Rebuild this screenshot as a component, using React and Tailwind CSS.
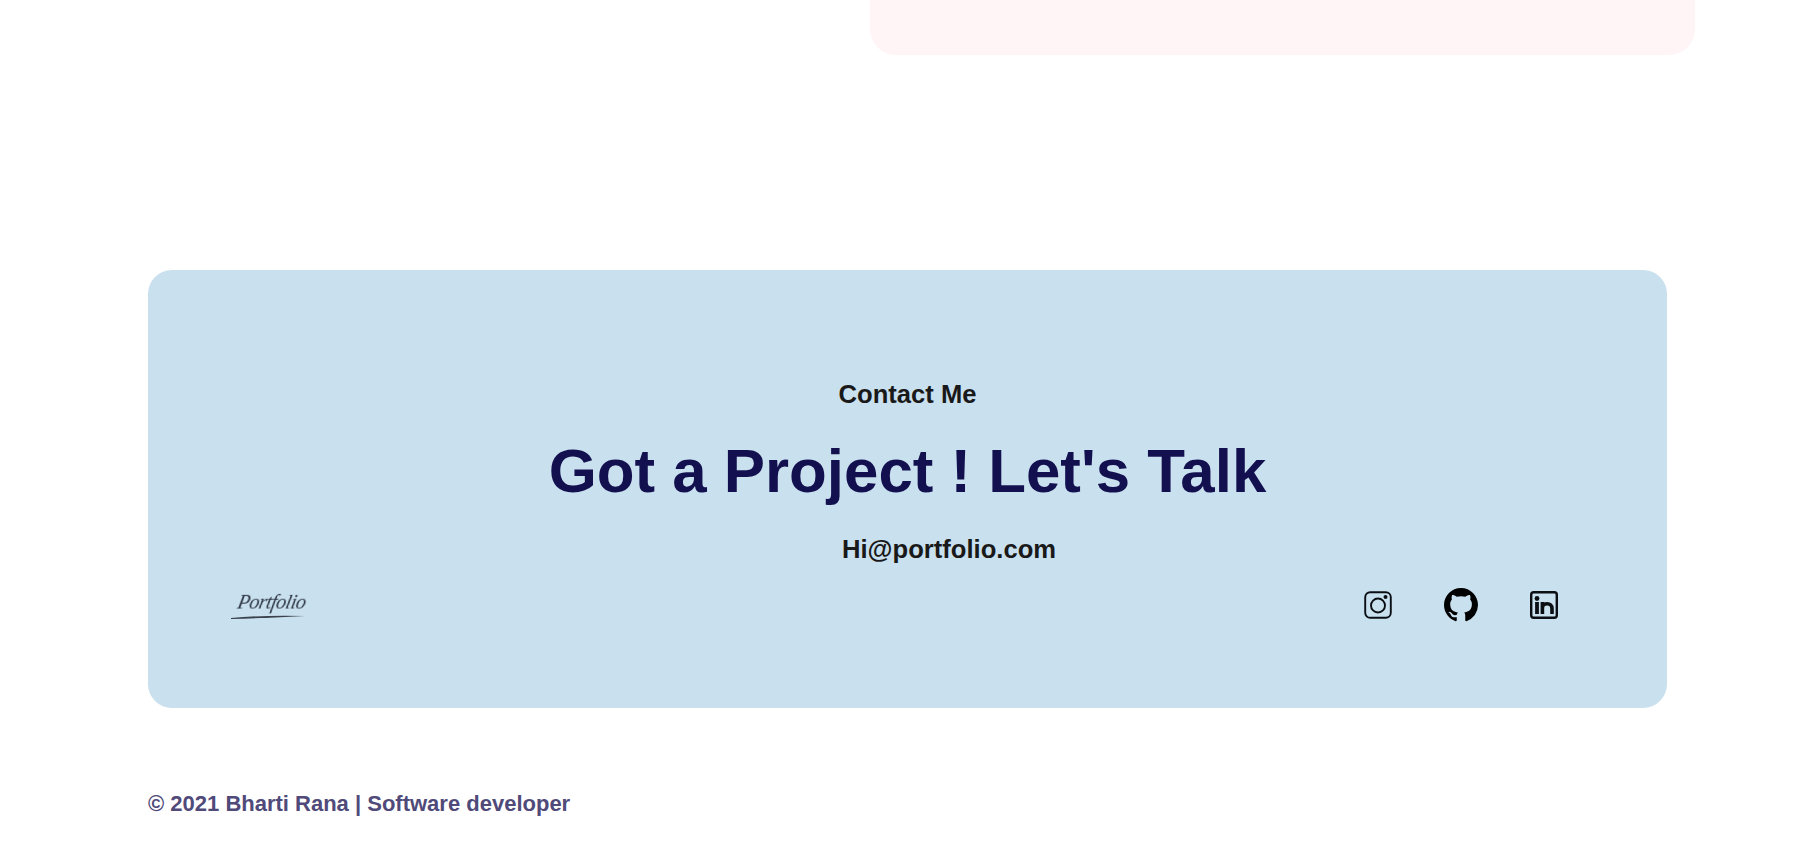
import React from "react";

function InstagramIcon() {
  return (
    <svg viewBox="0 0 28 28" className="h-[28px] w-[28px]" fill="none" stroke="#0b0f14">
      <rect x="1.2" y="1.2" width="25.6" height="25.6" rx="5" strokeWidth="1.9" />
      <circle cx="14" cy="14.5" r="7" strokeWidth="1.9" />
      <circle cx="21.5" cy="6" r="2" fill="#0b0f14" stroke="none" />
    </svg>
  );
}

function GithubIcon() {
  return (
    <svg viewBox="0 0 16 16" className="h-[34px] w-[34px]" fill="#000">
      <path d="M8 0C3.58 0 0 3.58 0 8c0 3.54 2.29 6.53 5.47 7.59.4.07.55-.17.55-.38 0-.19-.01-.82-.01-1.49-2.01.37-2.53-.49-2.69-.94-.09-.23-.48-.94-.82-1.13-.28-.15-.68-.52-.01-.53.63-.01 1.08.58 1.23.82.72 1.21 1.87.87 2.33.66.07-.52.28-.87.51-1.07-1.78-.2-3.64-.89-3.64-3.95 0-.87.31-1.59.82-2.15-.08-.2-.36-1.02.08-2.12 0 0 .67-.21 2.2.82.64-.18 1.32-.27 2-.27.68 0 1.36.09 2 .27 1.53-1.04 2.2-.82 2.2-.82.44 1.1.16 1.92.08 2.12.51.56.82 1.27.82 2.15 0 3.07-1.87 3.75-3.65 3.95.29.25.54.73.54 1.48 0 1.07-.01 1.93-.01 2.2 0 .21.15.46.55.38A8.013 8.013 0 0016 8c0-4.42-3.58-8-8-8z" />
    </svg>
  );
}

function LinkedinIcon() {
  return (
    <svg viewBox="0 0 28 28" className="h-[28px] w-[28px]" fill="none" stroke="#0b0f14">
      <rect x="1.2" y="1.2" width="25.6" height="25.6" rx="2.5" strokeWidth="2.4" />
      <circle cx="7" cy="7.5" r="2.4" fill="#0b0f14" stroke="none" />
      <path d="M7 11v12" strokeWidth="3.8" />
      <path d="M12.4 23V11M12.4 17c0-5.5 9.6-6 9.6 .5V23" strokeWidth="3.6" />
    </svg>
  );
}

export default function App() {
  return (
    <div className="h-[855px] overflow-hidden bg-white font-['Liberation_Sans',Arial,sans-serif]">
      <div className="ml-[870px] h-[55px] w-[825px] rounded-b-[26px] bg-[#fff5f6]" />
      <section className="ml-[148px] mt-[215px] h-[438px] w-[1519px] rounded-[24px] bg-[#c9e0ef] pt-[110px]">
        <p className="text-center text-[25.6px] font-bold leading-[28px] text-[#191919]">Contact Me</p>
        <h2 className="mt-[26px] text-center text-[61.8px] font-bold leading-[74px] text-[#12104e]">Got a Project ! Let's Talk</h2>
        <p className="mt-[27px] pl-[694px] text-[25.6px] font-bold leading-[28px] text-[#191919]">Hi@portfolio.com</p>
        <div className="mt-[22px] flex items-center justify-between pl-[83px] pr-[109px]">
          <div className="relative h-[40px] w-[78px]">
            <span className="absolute left-[7px] top-[4px] -skew-x-12 font-['Liberation_Serif',serif] text-[20px] italic leading-[26px] tracking-[-0.5px] text-[#2b3440] blur-[0.5px]">Portfolio</span>
            <svg viewBox="0 0 78 40" className="absolute inset-0 h-full w-full">
              <path d="M0 33 Q30 30 74 31 Q40 33 0 34Z" fill="#3a424c" />
            </svg>
          </div>
          <div className="flex items-center gap-[52px]">
            <InstagramIcon />
            <GithubIcon />
            <LinkedinIcon />
          </div>
        </div>
      </section>
      <p className="ml-[148px] mt-[84px] text-[22px] font-bold leading-[24px] text-[#504a7a]">© 2021 Bharti Rana | Software developer</p>
    </div>
  );
}
